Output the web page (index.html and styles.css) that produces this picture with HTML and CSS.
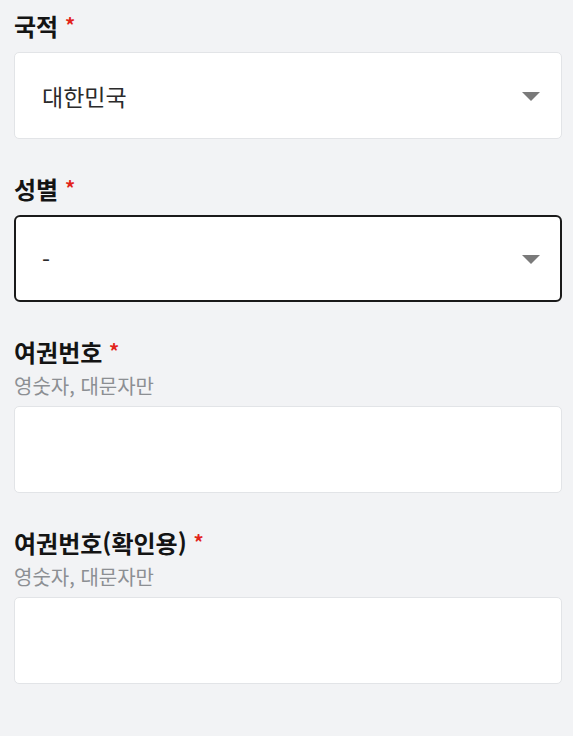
FILE: index.html
```html
<!DOCTYPE html>
<html lang="ko">
<head>
<meta charset="utf-8">
<link rel="stylesheet" href="styles.css">
</head>
<body>
<form class="form">
  <div class="field">
    <div class="label">국적 <span class="req">*</span></div>
    <div class="box">
      <span class="value">대한민국</span>
      <span class="caret"></span>
    </div>
  </div>
  <div class="field">
    <div class="label">성별 <span class="req">*</span></div>
    <div class="box focused">
      <span class="value">-</span>
      <span class="caret"></span>
    </div>
  </div>
  <div class="field">
    <div class="label with-hint">여권번호 <span class="req">*</span></div>
    <div class="hint">영숫자, 대문자만</div>
    <div class="box"></div>
  </div>
  <div class="field">
    <div class="label with-hint">여권번호(확인용) <span class="req">*</span></div>
    <div class="hint">영숫자, 대문자만</div>
    <div class="box"></div>
  </div>
</form>
</body>
</html>
```

FILE: styles.css
```css
html, body {
  margin: 0;
  padding: 0;
  background: #f2f3f5;
}
body {
  font-family: "Noto Sans CJK KR", "Noto Sans", sans-serif;
  width: 573px;
  height: 736px;
  overflow: hidden;
}
.form {
  padding: 12px 11px 0 14px;
  display: flex;
  flex-direction: column;
  gap: 36px;
}
.label {
  font-size: 24px;
  line-height: 28px;
  height: 28px;
  font-weight: 700;
  color: #141414;
  margin-bottom: 12px;
}
.label.with-hint {
  margin-bottom: 9px;
}
.req {
  color: #e2231a;
  font-size: 20px;
  line-height: 0;
  vertical-align: 3px;
}
.hint {
  font-size: 20px;
  line-height: 22px;
  height: 22px;
  color: #8c8f93;
  margin-bottom: 9px;
}
.box {
  box-sizing: border-box;
  height: 87px;
  background: #fff;
  border: 1px solid #e2e4e7;
  border-radius: 5px;
  display: flex;
  align-items: center;
  justify-content: space-between;
  padding: 0 21px 0 27px;
}
.box.focused {
  border: 2px solid #1a1a1a;
  border-radius: 6px;
  padding-left: 26px;
  padding-right: 20px;
}
.value {
  font-size: 23px;
  color: #2b2b2b;
}
.caret {
  width: 0;
  height: 0;
  border-left: 9px solid transparent;
  border-right: 9px solid transparent;
  border-top: 9px solid #7a7a7a;
  margin-top: 1px;
}
```
